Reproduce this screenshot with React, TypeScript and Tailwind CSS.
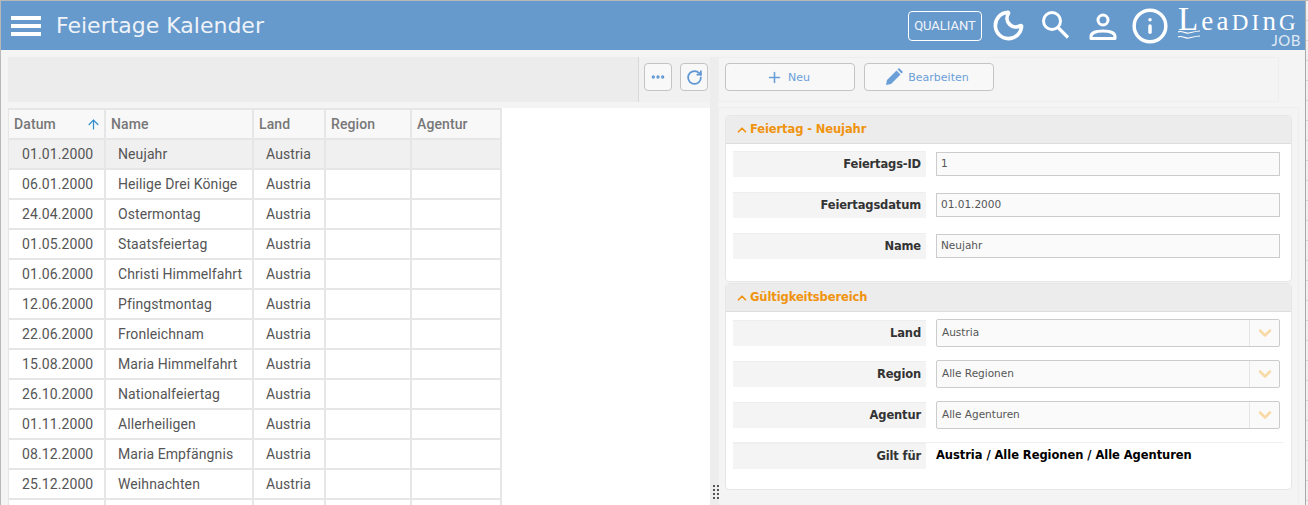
import { Plus, RotateCw, Ellipsis, ChevronUp, ChevronDown, ArrowUp, Moon, Info } from "lucide-react"

const rows = [
  ["01.01.2000", "Neujahr"],
  ["06.01.2000", "Heilige Drei Könige"],
  ["24.04.2000", "Ostermontag"],
  ["01.05.2000", "Staatsfeiertag"],
  ["01.06.2000", "Christi Himmelfahrt"],
  ["12.06.2000", "Pfingstmontag"],
  ["22.06.2000", "Fronleichnam"],
  ["15.08.2000", "Maria Himmelfahrt"],
  ["26.10.2000", "Nationalfeiertag"],
  ["01.11.2000", "Allerheiligen"],
  ["08.12.2000", "Maria Empfängnis"],
  ["25.12.2000", "Weihnachten"],
  ["", ""],
]

function Header() {
  return (
    <header className="h-[49px] bg-[#6699cc] flex items-center text-white shrink-0">
      <svg width="30" height="20" viewBox="0 0 30 20" fill="white" className="ml-[10px]">
        <rect x="0" y="0" width="30" height="4" />
        <rect x="0" y="8" width="30" height="4" />
        <rect x="0" y="16" width="30" height="4" />
      </svg>
      <h1 className="ml-[15px] text-[22px] font-['DejaVu_Sans',sans-serif] text-[#eef3f9]">Feiertage Kalender</h1>
      <div className="ml-auto flex items-center">
        <div className="w-[74px] h-[30px] rounded border border-white flex items-center justify-center text-[13px] font-['Roboto',sans-serif] text-[#f2f6fa]">QUALIANT</div>
        <Moon size={35} strokeWidth={2.5} className="ml-[9px]" />
        <svg width="34" height="34" viewBox="0 0 34 34" fill="none" stroke="white" strokeWidth="3" className="ml-[13px]">
          <circle cx="13" cy="12" r="8.5" />
          <path d="M19 18.5 29 28.5" strokeWidth="3.2" />
        </svg>
        <svg width="34" height="34" viewBox="0 0 34 34" fill="none" stroke="white" strokeWidth="3" className="ml-[13px]">
          <circle cx="17" cy="11" r="5" />
          <path d="M5 29.5v-2c0-3 4-5.500 12-5.500s12 2.500 12 5.500v2z" strokeLinejoin="round" />
        </svg>
        <Info size={38} strokeWidth={2.2} className="ml-[11px]" />
        <div className="ml-[8px] w-[128px] h-[46px] relative">
          <div className="absolute top-[4px] left-[1px] font-['Liberation_Serif',serif] leading-[25px] tracking-[3.2px] text-white whitespace-nowrap">
            <span className="text-[33px]">L</span>
            <span className="text-[27px]">ea</span>
            <span className="text-[23px]">DI</span>
            <span className="text-[27px]">n</span>
            <span className="text-[23px]">G</span>
          </div>
          <svg width="24" height="9" viewBox="0 0 24 9" fill="none" stroke="white" strokeWidth="1.2" className="absolute left-[1px] top-[27px]">
            <path d="M0 2c4-2 7 2 11 1s7-2 11-2M0 7c4-2 7 2 11 1s7-2 11-2" />
          </svg>
          <div className="absolute right-[4px] top-[31px] text-[15px] leading-[13px] tracking-[0.5px] font-['Lato',sans-serif] text-[#dfe9f3]">JOB</div>
        </div>
      </div>
    </header>
  )
}

function Th({ w, children }: { w: string; children?: React.ReactNode }) {
  return (
    <div className={`${w} shrink-0 h-full flex items-center justify-between px-[5px] border-r-2 border-[#e6e6e6] text-[#777] font-medium`}>
      {children}
    </div>
  )
}

function Td({ w, shade, children }: { w: string; shade: boolean; children?: React.ReactNode }) {
  return (
    <div className={`${w} shrink-0 h-full flex items-center pl-[12px] border-r-2 border-[#e6e6e6] ${shade ? "bg-[#f0f0f0]" : ""}`}>
      {children}
    </div>
  )
}

function Grid() {
  return (
    <div className="w-[702px] flex-1 bg-white mt-[6px] overflow-hidden">
      <div className="w-[494px] font-['Roboto',sans-serif] text-[14px] tracking-[0.1px] text-[#555]">
        <div className="flex h-[30px] bg-[#f8f8f8] border-t-2 border-l border-[#e6e6e6]">
          <Th w="w-[97px]">
            Datum
            <ArrowUp size={15} strokeWidth={2} className="text-[#2f8fd0] mr-[-2px]" />
          </Th>
          <Th w="w-[148px]">Name</Th>
          <Th w="w-[72px]">Land</Th>
          <Th w="w-[86px]">Region</Th>
          <Th w="w-[90px]">Agentur</Th>
        </div>
        {rows.map(([date, name], i) => (
          <div key={i} className="flex h-[30px] border-t-2 border-l border-[#e6e6e6]">
            <Td w="w-[97px]" shade={i === 0}><span className="pl-[1px]">{date}</span></Td>
            <Td w="w-[148px]" shade={i === 0}>{name}</Td>
            <Td w="w-[72px]" shade={i === 0}>{date && "Austria"}</Td>
            <Td w="w-[86px]" shade={i === 0} />
            <Td w="w-[90px]" shade={i === 0} />
          </div>
        ))}
      </div>
    </div>
  )
}

function IconButton({ children }: { children: React.ReactNode }) {
  return (
    <button className="w-[28px] h-[28px] rounded border border-[#c4c4c4] bg-[#f8f8f8] flex items-center justify-center text-[#5f97d3]">
      {children}
    </button>
  )
}

function ActionButton({ icon, label }: { icon: React.ReactNode; label: string }) {
  return (
    <button className="w-[130px] h-[28px] pr-[4px] rounded border border-[#c4c4c4] bg-[#f8f8f8] flex items-center justify-center gap-[5px] text-[11px] text-[#6a9fd8] font-['DejaVu_Sans',sans-serif]">
      {icon}
      <span className="pt-[2px]">{label}</span>
    </button>
  )
}

function Label({ children }: { children: React.ReactNode }) {
  return (
    <div className="w-[193px] h-[26px] bg-[#f4f4f4] border-t border-[#eeeeee] flex items-center justify-end pr-[5px] text-[11.5px] tracking-[-0.15px] font-bold text-[#333]">
      {children}
    </div>
  )
}

function TextRow({ label, value }: { label: string; value: string }) {
  return (
    <div className="flex items-center">
      <Label>{label}</Label>
      <div className="ml-[10px] w-[344px] h-[24px] bg-[#fafafa] border border-[#cccccc] flex items-center pl-[4px] text-[10.5px] text-[#555]">{value}</div>
    </div>
  )
}

function SelectRow({ label, value }: { label: string; value: string }) {
  return (
    <div className="flex items-center">
      <Label>{label}</Label>
      <div className="ml-[10px] w-[344px] h-[28px] bg-[#fafafa] border border-[#cccccc] rounded-[2px] flex items-center pl-[5px] text-[10.5px] text-[#555]">
        <span className="flex-1">{value}</span>
        <div className="w-[30px] h-full border-l border-[#e6e6e6] flex items-center justify-center">
          <ChevronDown size={20} strokeWidth={3} className="text-[#f9d9a5]" />
        </div>
      </div>
    </div>
  )
}

function SectionHead({ children }: { children: React.ReactNode }) {
  return (
    <div className="h-[28px] bg-[#ececec] border-b border-[#dddddd] rounded-t flex items-center pl-[9px] gap-[1px] text-[11.5px] tracking-[-0.1px] font-bold text-[#f0930f]">
      <ChevronUp size={14} strokeWidth={3} />
      {children}
    </div>
  )
}

export default function App() {
  return (
    <div className="w-[1308px] h-[505px] overflow-hidden bg-[#f4f4f4] border-t border-l border-[#b8b8b8] font-['DejaVu_Sans',sans-serif] flex">
      <div className="w-[1304px] shrink-0 flex flex-col">
        <Header />
        <main className="flex-1 flex min-h-0 pt-[7px]">
          <section className="w-[709px] shrink-0 pl-[7px] flex flex-col">
            <div className="w-[702px] h-[45px] flex shrink-0">
              <div className="w-[631px] bg-[#ececec] border-r border-[#d8d8d8]" />
              <div className="flex-1 flex items-start gap-[8px] pt-[6px] pl-[5px] bg-[#f1f1f1]">
                <IconButton><Ellipsis size={16} strokeWidth={3} /></IconButton>
                <IconButton><RotateCw size={17} strokeWidth={2.5} /></IconButton>
              </div>
            </div>
            <Grid />
          </section>

          <section className="flex-1 border-l-[8px] border-[#ededed] relative">
            <div className="absolute left-[-5px] bottom-[6px] grid grid-cols-2 gap-[2px]">
              {[0, 1, 2, 3, 4, 5, 6, 7].map((d) => (
                <span key={d} className="w-[2px] h-[2px] bg-[#555]" />
              ))}
            </div>
            <div className="w-[561px] h-[45px] border border-[#eeeeee] flex items-start gap-[9px] pt-[5px] pl-[6px]">
              <ActionButton icon={<Plus size={17} strokeWidth={2.2} />} label="Neu" />
              <ActionButton
                icon={
                  <svg width="18" height="18" viewBox="0 0 18 18" fill="currentColor">
                    <path d="M1 17l1-5L11.500 2.500l4 4L6 16zM12.500 1.500 14 0l4 4-1.500 1.500z" />
                  </svg>
                }
                label="Bearbeiten"
              />
            </div>
            <div className="mt-[5px] w-[581px] h-[400px] border border-[#eeeeee] pt-[7px] pl-[6px]">
              <div className="w-[567px] h-[167px] bg-white rounded border border-[#e6e6e6]">
                <SectionHead>Feiertag - Neujahr</SectionHead>
                <div className="pl-[7px] pt-[7px] flex flex-col gap-[15px]">
                  <TextRow label="Feiertags-ID" value="1" />
                  <TextRow label="Feiertagsdatum" value="01.01.2000" />
                  <TextRow label="Name" value="Neujahr" />
                </div>
              </div>
              <div className="mt-[1px] w-[567px] h-[207px] bg-white rounded border border-[#e6e6e6]">
                <SectionHead>Gültigkeitsbereich</SectionHead>
                <div className="pl-[7px] pt-[7px] flex flex-col gap-[13px]">
                  <SelectRow label="Land" value="Austria" />
                  <SelectRow label="Region" value="Alle Regionen" />
                  <SelectRow label="Agentur" value="Alle Agenturen" />
                  <div className="flex items-center border-t border-[#f0f0f0] w-[551px]">
                    <Label>Gilt für</Label>
                    <div className="ml-[10px] text-[11.5px] tracking-[-0.05px] font-bold text-black">Austria / Alle Regionen / Alle Agenturen</div>
                  </div>
                </div>
              </div>
            </div>
          </section>
        </main>
      </div>
      <div className="flex-1 border-l border-[#aaaaaa] bg-[#f0f0f0] flex flex-col">
        {Array.from({ length: 25 }, (_, i) => (
          <div key={i} className="h-[20px] shrink-0 border-b border-[#d4d4d4]" />
        ))}
      </div>
    </div>
  )
}
